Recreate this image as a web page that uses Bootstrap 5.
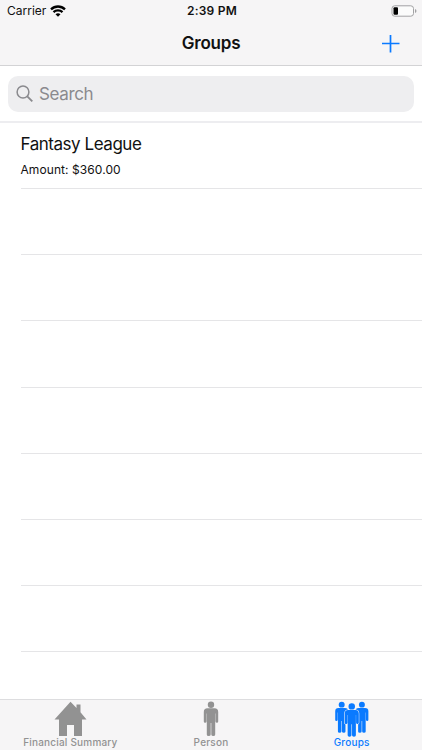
<!DOCTYPE html>
<html lang="en">
<head>
<meta charset="utf-8">
<meta name="viewport" content="width=device-width, initial-scale=1">
<title>Groups</title>
<link href="https://cdn.jsdelivr.net/npm/bootstrap@5.3.0/dist/css/bootstrap.min.css" rel="stylesheet">
<style>
body{font-family:Inter,"Liberation Sans",sans-serif;color:#111;background:#fff;height:750px;line-height:1}
svg{display:block}
.top-area{height:66px;background:#f6f5f6;border-bottom:1px solid #d3d3d5}
.status-line{height:22px;padding:0 5px 0 7px;font-size:12px}
.side{flex:1 1 0}
.clock{font-weight:600;font-size:12px;letter-spacing:.2px;color:#111}
.title-line{height:43px;padding:0 22.500px}
.title-text{font-size:17px;font-weight:600;letter-spacing:-.2px;margin:0;line-height:43px}
.search-area{height:57px;padding:10px 8px;border-bottom:2px solid #ededf0}
.search-box{height:36px;border-radius:10px;background:#eeeef0;color:#8a8a8e;padding-left:8px;font-size:17px}
.search-label{letter-spacing:-.35px;margin-left:1px}
.group-list{padding-left:20.500px;overflow:hidden}
.group-row{height:66.170px;border-bottom:1px solid #e5e5e7;flex:none}
.group-name{font-size:17px;line-height:20px;margin-top:11px;letter-spacing:-.46px}
.group-amount{font-size:12px;line-height:16px;margin-top:8px;letter-spacing:.08px}
.tab-area{height:51px;background:#f6f5f6;border-top:1px solid #dddddf;font-size:10px;font-weight:500;letter-spacing:.2px}
.tab-link{color:#929292;width:33.333%;padding-top:1px}
.tab-link.current{color:#0a7aff}
.tab-link svg{height:37px}
.tab-link span{line-height:10px;margin-top:-1px}
</style>
<script src="https://cdn.jsdelivr.net/npm/bootstrap@5.3.0/dist/js/bootstrap.bundle.min.js"></script>
</head>
<body class="d-flex flex-column overflow-hidden">
<header class="top-area flex-shrink-0">
  <div class="status-line d-flex align-items-center">
    <div class="side d-flex align-items-center gap-1"><span>Carrier</span>
      <svg width="16" height="12" viewBox="0 0 16 12" fill="none" stroke="#000"><path d="M1 4.400C5 .5 11 .5 15 4.400M3.500 7.100C6 4.700 10 4.700 12.500 7.100" stroke-width="2.300"/><path d="M5.500 9.300Q8 7.200 10.500 9.300L8 11.700Z" fill="#000" stroke="none"/></svg>
    </div>
    <span class="clock">2:39 PM</span>
    <div class="side d-flex justify-content-end">
      <svg width="26" height="12" viewBox="0 0 26 12"><rect x="1" y=".8" width="21.500" height="10.400" rx="2.700" fill="#fbfbfb" stroke="#a2a2a4"/><rect x="2.500" y="2.300" width="4.500" height="7.400" rx="1"/><path d="M24 4v4q1.500-.6 1.500-2T24 4" fill="#a2a2a4"/></svg>
    </div>
  </div>
  <nav class="title-line d-flex align-items-center">
    <div class="side"></div>
    <h1 class="title-text">Groups</h1>
    <div class="side d-flex justify-content-end"><svg width="18" height="18" viewBox="0 0 18 18" stroke="#0a7aff" stroke-width="1.700"><path d="M8.500 0v17.500M0 8.500h17.500"/></svg></div>
  </nav>
</header>
<section class="search-area flex-shrink-0">
  <div class="search-box d-flex align-items-center">
    <svg class="me-1" width="18" height="18" viewBox="0 0 18 18" fill="none" stroke="#8a8a8e" stroke-width="1.500"><circle cx="7" cy="7" r="5.900"/><path d="M11.300 11.300L16.300 16.300" stroke-width="1.900"/></svg>
    <span class="search-label">Search</span>
  </div>
</section>
<main class="group-list flex-grow-1 d-flex flex-column">
  <div class="group-row"><div class="group-name">Fantasy League</div><div class="group-amount">Amount: $360.00</div></div>
  <div class="group-row"></div><div class="group-row"></div><div class="group-row"></div>
  <div class="group-row"></div><div class="group-row"></div><div class="group-row"></div><div class="group-row"></div>
</main>
<footer class="tab-area d-flex flex-shrink-0">
  <a class="tab-link d-flex flex-column align-items-center text-decoration-none" href="#">
    <svg width="34" height="37" viewBox="0 0 34 37" fill="currentColor"><path d="M17.500 .7L23.500 7V3.500H27.500V11.300L33.500 18.500H29V35H21V24H14V35H6V18.500H1.500Z"/></svg><span>Financial Summary</span></a>
  <a class="tab-link d-flex flex-column align-items-center text-decoration-none" href="#">
    <svg width="16" height="37" viewBox="0 0 16 37" fill="currentColor"><circle cx="8" cy="3.700" r="3.200"/><path d="M4.500 7.300H11.500Q15.200 7.300 15.200 11V20.500Q15.200 21.800 13.900 21.800T12.500 20.500V12.500H12.200V33.500Q12.200 35 10.300 35T8.300 33.500V22H7.700V33.500Q7.700 35 5.700 35T3.800 33.500V12.500H3.500V20.500Q3.500 21.800 2.100 21.800T.8 20.500V11Q.8 7.300 4.500 7.300"/></svg><span>Person</span></a>
  <a class="tab-link current d-flex flex-column align-items-center text-decoration-none" href="#">
    <svg width="34" height="37" viewBox="0 0 34 37" fill="currentColor"><defs><g id="figure"><circle cx="8" cy="3.700" r="3.300"/><path d="M4.500 7.500H11.500Q15.200 7.500 15.200 11V20.500Q15.200 21.800 13.900 21.800T12.500 20.500V12.500H12.200V33.500Q12.200 35 10.300 35T8.300 33.500V22H7.700V33.500Q7.700 35 5.700 35T3.800 33.500V12.500H3.500V20.500Q3.500 21.800 2.100 21.800T.8 20.500V11Q.8 7.500 4.500 7.500"/></g></defs><use href="#figure" transform="translate(-.5 .3) scale(.9)"/><use href="#figure" transform="translate(19.700 .3) scale(.9)"/><use href="#figure" transform="translate(9 1.800) scale(.97)" stroke="#f6f5f6" stroke-width="1.100"/><use href="#figure" transform="translate(9 1.800) scale(.97)"/></svg><span>Groups</span></a>
</footer>
</body>
</html>
